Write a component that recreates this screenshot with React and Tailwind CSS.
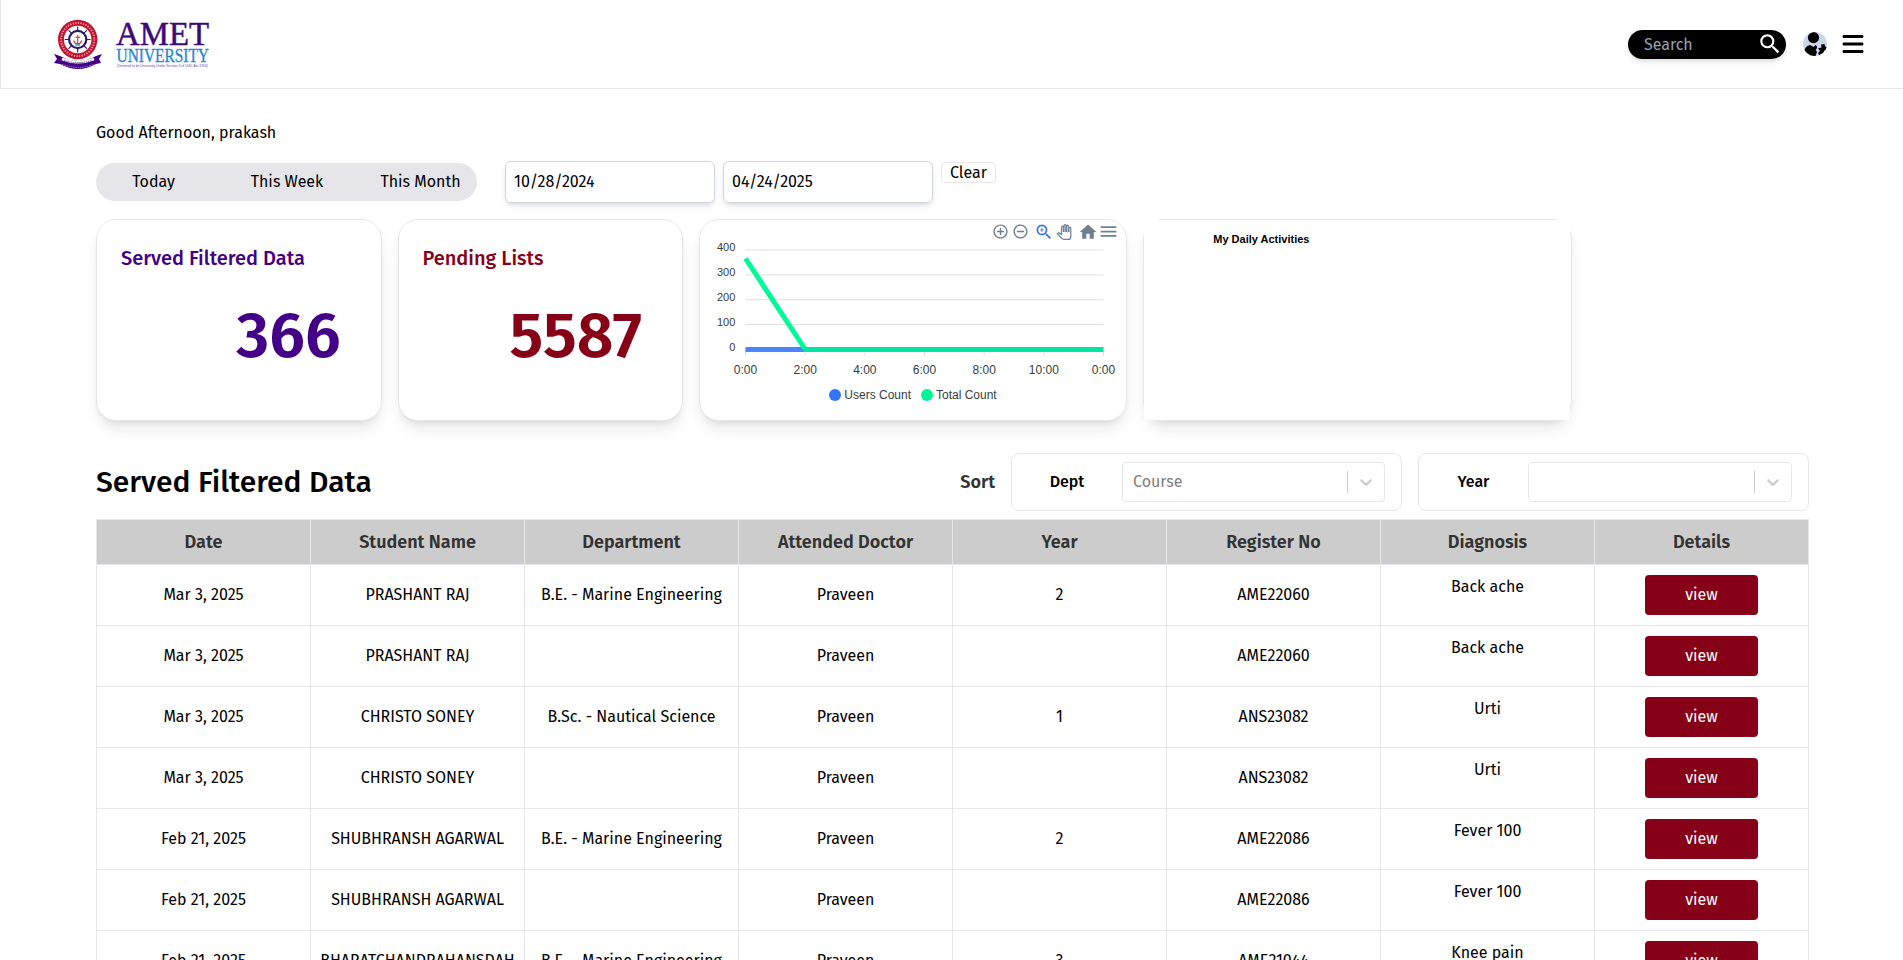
import React from "react";
import { FaBars } from "react-icons/fa6";
import { MdSearch, MdAddCircleOutline, MdRemoveCircleOutline, MdZoomIn, MdHome, MdMenu } from "react-icons/md";

const rows = [
  ["Mar 3, 2025", "PRASHANT RAJ", "B.E. - Marine Engineering", "Praveen", "2", "AME22060", "Back ache"],
  ["Mar 3, 2025", "PRASHANT RAJ", "", "Praveen", "", "AME22060", "Back ache"],
  ["Mar 3, 2025", "CHRISTO SONEY", "B.Sc. - Nautical Science", "Praveen", "1", "ANS23082", "Urti"],
  ["Mar 3, 2025", "CHRISTO SONEY", "", "Praveen", "", "ANS23082", "Urti"],
  ["Feb 21, 2025", "SHUBHRANSH AGARWAL", "B.E. - Marine Engineering", "Praveen", "2", "AME22086", "Fever 100"],
  ["Feb 21, 2025", "SHUBHRANSH AGARWAL", "", "Praveen", "", "AME22086", "Fever 100"],
  ["Feb 21, 2025", "BHARATCHANDRAHANSDAH", "B.E. - Marine Engineering", "Praveen", "3", "AME21044", "Knee pain"],
];
const heads = ["Date", "Student Name", "Department", "Attended Doctor", "Year", "Register No", "Diagnosis", "Details"];

function Logo() {
  const spokes = [0, 45, 90, 135, 180, 225, 270, 315];
  return (
    <svg width="160" height="60" viewBox="52 15 160 60" className="relative top-px">
      <path d="M54 54 L60 56 Q78 66 96 56 L102 54 L99 59 L101 63 L96 64 Q78 74 60 64 L54 63 L57 59 Z" fill="#430086" />
      <circle cx="77.7" cy="39.5" r="19.7" fill="#c4122f" />
      <circle cx="77.7" cy="39.5" r="16.6" fill="none" stroke="#f0b5be" strokeWidth="1.8" strokeDasharray="1.1 1.5" />
      <circle cx="77.7" cy="39.5" r="13.8" fill="#fff" />
      <g stroke="#2a1a6e" strokeWidth="1.2" strokeLinecap="round">
        {spokes.map((a) => (
          <line key={a} x1="77.7" y1="33" x2="77.7" y2="27" transform={`rotate(${a} 77.7 39.5)`} />
        ))}
      </g>
      <circle cx="77.7" cy="39.5" r="8.6" fill="#fff" stroke="#2a1a6e" strokeWidth="2.2" />
      <path d="M77.7 35 V43.5 M75.5 37.3 H80 M73.7 40.5 Q74.7 44 77.7 44 Q80.7 44 81.7 40.5" fill="none" stroke="#d8432f" strokeWidth="1.2" />
      <path d="M75.5 45 H80" stroke="#1f9ad6" strokeWidth="1.5" />
      <path d="M62 59 Q78 65.5 94 59" fill="none" stroke="#fff" strokeWidth="2.6" />
      <path d="M64 60.3 Q78 65 92 60.3" fill="none" stroke="#5a4a86" strokeWidth="0.9" strokeDasharray="1.5 0.7" />
      <path d="M62 64.3 Q78 70.5 94 64.3" fill="none" stroke="#a98bd0" strokeWidth="0.9" strokeDasharray="1.5 0.8" />
      <g fontFamily="'Liberation Serif', serif">
        <text x="116" y="44.8" fontSize="34.5" fill="#3b0a78" stroke="#3b0a78" strokeWidth="0.5" textLength="93" lengthAdjust="spacingAndGlyphs">AMET</text>
        <text x="116.5" y="61.7" fontSize="18" fill="#1b87d3" stroke="#1b87d3" strokeWidth="0.3" textLength="92.5" lengthAdjust="spacingAndGlyphs">UNIVERSITY</text>
      </g>
      <text x="117" y="67.4" fontSize="3.8" fontFamily="'Liberation Sans', sans-serif" fill="#6b3fa0" textLength="91" lengthAdjust="spacingAndGlyphs">(Deemed to be University Under Section 3 of UGC Act 1956)</text>
    </svg>
  );
}

function Avatar() {
  return (
    <svg width="24" height="24" viewBox="0 0 24 24">
      <defs><clipPath id="av"><circle cx="12" cy="12" r="12" /></clipPath></defs>
      <g clipPath="url(#av)">
        <rect width="24" height="24" fill="#cbd5e8" />
        <circle cx="10.5" cy="5.6" r="5.6" />
        <path d="M1 19 Q2.5 14 7 13 L10.5 15 L12.5 13 Q14.5 14 14 16 L12.7 18 L14 20 L12.5 24 H3 Z" />
        <path d="M15 16.2 L18.5 15.5 L18 12.5 L21.5 12 L22 14.5 L24 15 V18.5 L21 18.5 L20.5 21 L16 23 L15.2 21 L17 19 Z" />
      </g>
    </svg>
  );
}

function Chart() {
  const xs = [0, 1, 2, 3, 4, 5, 6].map((i) => 45.5 + i * 59.67);
  const labels = ["0:00", "2:00", "4:00", "6:00", "8:00", "10:00", "0:00"];
  return (
    <svg width="426" height="200" viewBox="0 0 426 200" fontFamily="'Liberation Sans', Arial, sans-serif">
      {[400, 300, 200, 100, 0].map((v, i) => (
        <g key={v}>
          <line x1="45.5" x2="403.5" y1={30 + i * 24.85} y2={30 + i * 24.85} stroke="#e0e0e0" />
          <text x="35.3" y={31 + i * 25} textAnchor="end" fontSize="11" fill="#373d3f">{v}</text>
        </g>
      ))}
      {xs.map((x, i) => (
        <g key={i}>
          <line x1={x} x2={x} y1="130" y2="136" stroke="#e0e0e0" />
          <text x={x} y="154" textAnchor="middle" fontSize="12" fill="#373d3f">{labels[i]}</text>
        </g>
      ))}
      <line x1="45.5" x2="106" y1="129.5" y2="129.5" stroke="#4c84fb" strokeWidth="5" />
      <path d="M45.5 38.5 L105.3 129.5" stroke="#00fa9a" strokeWidth="5" fill="none" />
      <line x1="104" x2="403.5" y1="129.5" y2="129.5" stroke="#00e6a4" strokeWidth="5" />
      <circle cx="135" cy="175" r="6" fill="#3772ff" />
      <text x="144.3" y="179" fontSize="12" fill="#373d3f">Users Count</text>
      <circle cx="227" cy="175" r="6" fill="#00f794" />
      <text x="236" y="179" fontSize="12" fill="#373d3f">Total Count</text>
    </svg>
  );
}

function Toolbar() {
  return (
    <div className="absolute left-[291.5px] top-[1px] flex h-[21px] items-center text-[#6e8192]">
      <MdAddCircleOutline size={17} />
      <MdRemoveCircleOutline size={17} className="ml-[3px]" />
      <MdZoomIn size={20} className="ml-[5px] text-[#3772ff]" />
      <svg width="16" height="16" viewBox="-1 -1 26 26" className="ml-[2px]">
        <path d="M23 5.5V20c0 2.2-1.8 4-4 4h-7.3c-1.08 0-2.1-.43-2.85-1.19L1 14.83s1.26-1.23 1.3-1.25c.22-.19.49-.29.79-.29.22 0 .42.06.6.16.04.01 4.31 2.46 4.31 2.46V4c0-.83.67-1.5 1.5-1.5S11 3.17 11 4v7h1V1.5c0-.83.67-1.5 1.5-1.5S15 .67 15 1.5V11h1V2.5c0-.83.67-1.5 1.5-1.5s1.5.67 1.5 1.5V11h1V5.5c0-.83.67-1.5 1.5-1.5s1.5.67 1.5 1.5z" fill="#fff" stroke="#6e8192" strokeWidth="2" />
      </svg>
      <MdHome size={20} className="ml-[6px]" />
      <MdMenu size={21} />
    </div>
  );
}

function Select({ placeholder }) {
  return (
    <>
      <span className="flex-1 text-[#808080]">{placeholder}</span>
      <span className="h-[22px] w-px bg-[#ccc]" />
      <svg width="20" height="20" viewBox="0 0 20 20" className="mx-[8px]" fill="#ccc">
        <path d="M4.516 7.548c0.436-0.446 1.043-0.481 1.576 0l3.908 3.747 3.908-3.747c0.533-0.481 1.141-0.446 1.574 0 0.436 0.445 0.408 1.197 0 1.615-0.406 0.418-4.695 4.502-4.695 4.502-0.217 0.223-0.502 0.335-0.787 0.335s-0.570-0.112-0.789-0.335c0 0-4.287-4.084-4.695-4.502s-0.436-1.170 0-1.615z" />
      </svg>
    </>
  );
}

function Filter({ label, placeholder, width }) {
  return (
    <div className="flex h-[58px] w-[391px] items-center rounded-lg border border-gray-200 pr-4">
      <div className="flex-1 text-center font-medium text-black">{label}</div>
      <div className={"flex h-10 items-center rounded border border-gray-200 pl-[10px] " + width}>
        <Select placeholder={placeholder} />
      </div>
    </div>
  );
}

export default function App() {
  const card = "h-[202px] shrink-0 rounded-[20px] border border-gray-200 bg-white shadow-lg";
  return (
    <div className="h-[960px] w-full overflow-hidden bg-white font-['Fira_Sans','Noto_Sans',sans-serif] text-base text-black">
      <header className="flex h-[89px] items-center justify-between border-b border-l border-gray-200 pl-[51px] pr-[38px]">
        <Logo />
        <div className="flex items-center">
          <div className="flex h-[29px] w-[158px] items-center justify-between rounded-full bg-black pl-4 pr-[3px] shadow-md">
            <span className="pt-[2px] leading-6 text-gray-400">Search</span>
            <MdSearch size={26} color="#fff" />
          </div>
          <div className="ml-[17px]"><Avatar /></div>
          <FaBars size={24} className="ml-[14px]" />
        </div>
      </header>
      <main className="pl-24 pt-[32px]">
        <p className="h-6 leading-6">Good Afternoon, prakash</p>
        <div className="mt-[16px] flex h-[42px] items-start">
          <div className="mt-[2px] flex h-[38px] w-[381px] items-center justify-between rounded-full bg-[#e5e5ea] pl-px">
            {["Today", "This Week", "This Month"].map((t) => (
              <button key={t} className="w-[113px] text-center">{t}</button>
            ))}
          </div>
          {["10/28/2024", "04/24/2025"].map((d, i) => (
            <div key={d} className={(i ? "ml-2" : "ml-7") + " flex h-[42px] w-[210px] items-center rounded-md border border-gray-300 pl-2 shadow-md"}>{d}</div>
          ))}
          <button className="ml-2 mt-px h-[21px] w-[55px] rounded border border-gray-200 text-center leading-[19px]">Clear</button>
        </div>
        <section className="mt-4 flex w-[1713px] gap-4">
          <div className={card + " w-[285.5px] pl-6 pr-[40px] pt-[24px] text-[#430086]"}>
            <h3 className="text-xl font-medium leading-7">Served Filtered Data</h3>
            <p className="mt-[32px] text-right text-[64px] font-semibold leading-[64px]">366</p>
          </div>
          <div className={card + " w-[285.5px] pl-6 pr-[40px] pt-[24px] text-[#860018]"}>
            <h3 className="text-xl font-medium leading-7">Pending Lists</h3>
            <p className="mt-[32px] text-right text-[64px] font-semibold leading-[64px]">5587</p>
          </div>
          <div className={card + " relative w-[428.25px]"}>
            <Chart />
            <Toolbar />
          </div>
          <div className={card + " w-[428.25px]"}>
            <div className="h-[200px] w-[426px] bg-white pl-[69px] pt-[13px] font-['Liberation_Sans',Arial,sans-serif] text-[11px] font-bold leading-[13px]">My Daily Activities</div>
          </div>
        </section>
        <section className="mt-[32px] flex h-[58px] w-[1713px] items-center">
          <h2 className="flex-1 text-3xl font-medium">Served Filtered Data</h2>
          <span className="mr-4 text-lg font-semibold text-[#333]">Sort</span>
          <Filter label="Dept" placeholder="Course" width="w-[263px]" />
          <div className="w-4" />
          <Filter label="Year" placeholder="" width="w-[264px]" />
        </section>
        <table className="mt-2 w-[1713px] table-fixed border-collapse text-center">
          <thead>
            <tr className="h-[45px] bg-[#ccc] text-lg text-[#333]">
              {heads.map((h) => (
                <th key={h} className="border border-gray-200 p-0 font-semibold">{h}</th>
              ))}
            </tr>
          </thead>
          <tbody>
            {rows.map((r, i) => (
              <tr key={i} className="h-[61px]">
                {r.map((c, j) => (
                  <td key={j} className={"whitespace-nowrap border border-gray-200 p-0 leading-6 " + (j === 6 ? "pb-4" : "")}>{c}</td>
                ))}
                <td className="border border-gray-200 p-0">
                  <button className="mx-auto block h-10 w-[113px] rounded bg-[#860018] text-white">view</button>
                </td>
              </tr>
            ))}
          </tbody>
        </table>
      </main>
    </div>
  );
}
